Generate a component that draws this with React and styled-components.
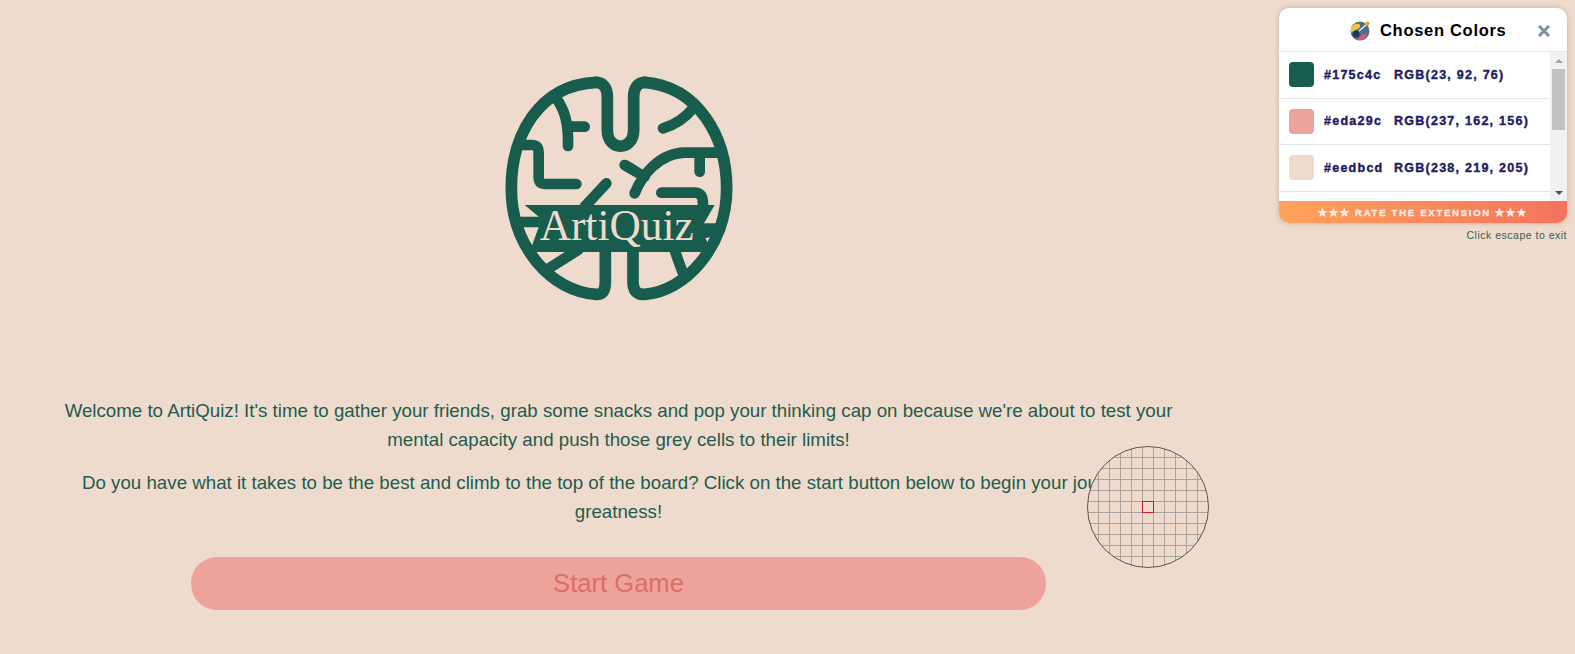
import React from 'react'
import styled, { createGlobalStyle } from 'styled-components'

const Global = createGlobalStyle`
  html, body { margin: 0; padding: 0; height: 100%; overflow: hidden; background: #eedbcd; }
  * { box-sizing: border-box; }
`

const Page = styled.div`
  position: relative;
  height: 654px;
  width: 1575px;
  background: #eedbcd;
  font-family: "Liberation Sans", Arial, sans-serif;
  overflow: hidden;
`
const Main = styled.main`
  width: 1237px;
  display: flex;
  flex-direction: column;
  align-items: center;
  padding: 60px 54px 0;
`
const Logo = styled.svg`
  width: 270px;
  height: 250px;
  display: block;
  margin-bottom: 86px;
`
const Para = styled.p`
  margin: 0 0 14px;
  font-size: 18.72px;
  line-height: 29px;
  color: #1f5c4d;
  text-align: center;
`
const StartButton = styled.button`
  width: 855px;
  height: 53px;
  margin-top: 17px;
  border: none;
  border-radius: 26px;
  background: #eda29c;
  color: #dc6f68;
  font-family: inherit;
  font-size: 25.6px;
`
const Magnifier = styled.div`
  position: absolute;
  left: 1087px;
  top: 446px;
  width: 122px;
  height: 122px;
  border-radius: 50%;
  border: 1px solid #5c5450;
  background-color: #eedbcd;
  background-image:
    repeating-linear-gradient(to right, transparent 0 10px, #aaa3a0 10px 11px),
    repeating-linear-gradient(to bottom, transparent 0 10px, #aaa3a0 10px 11px);
`
const Target = styled.div`
  position: absolute;
  left: 54px;
  top: 54px;
  width: 12px;
  height: 12px;
  border: 1px solid #d01c2a;
`
const Panel = styled.aside`
  position: absolute;
  left: 1279px;
  top: 8px;
  width: 288px;
  height: 215px;
  border-radius: 10px;
  background: #fff;
  box-shadow: 0 0 5px rgba(120, 90, 70, 0.35);
  display: flex;
  flex-direction: column;
  overflow: hidden;
`
const PanelHead = styled.header`
  height: 44px;
  flex: none;
  display: flex;
  align-items: center;
  border-bottom: 1px solid #e2e6ea;
  padding: 2px 0 0 71px;
`
const PanelTitle = styled.span`
  margin-left: 10px;
  font-size: 16.5px;
  font-weight: 700;
  letter-spacing: 0.7px;
  color: #000;
`
const CloseX = styled.svg`
  width: 14px;
  height: 14px;
  margin-left: 31px;
`
const PanelBody = styled.div`
  flex: 1;
  display: flex;
  min-height: 0;
`
const Rows = styled.div`
  flex: 1;
  overflow: hidden;
`
const Row = styled.div`
  height: 46.5px;
  display: flex;
  align-items: center;
  padding-left: 10px;
  border-bottom: 1px solid #e2e6ea;
`
const Swatch = styled.div`
  width: 25px;
  height: 25px;
  border-radius: 4px;
  background: ${p => p.$color};
  margin-right: 10px;
`
const Hex = styled.span`
  width: 70px;
  font-size: 12.5px;
  font-weight: 700;
  letter-spacing: 1.25px;
  color: #1d1d62;
  -webkit-text-stroke: 0.4px #1d1d62;
`
const Rgb = styled(Hex)`
  width: auto;
`
const Scrollbar = styled.div`
  width: 17px;
  flex: none;
  background: #f1f1f1;
  display: flex;
  flex-direction: column;
  align-items: center;
`
const Arrow = styled.div`
  height: 17px;
  flex: none;
  display: flex;
  align-items: center;
  justify-content: center;
  &::before {
    content: "";
    border-left: 4px solid transparent;
    border-right: 4px solid transparent;
    ${p => p.$down ? 'border-top: 4px solid #505050;' : 'border-bottom: 4px solid #a3a3a3;'}
  }
`
const Thumb = styled.div`
  width: 13px;
  height: 61px;
  background: #c1c1c1;
`
const Spacer = styled.div`
  flex: 1;
`
const RateBar = styled.div`
  height: 22px;
  flex: none;
  display: flex;
  align-items: center;
  justify-content: center;
  background: linear-gradient(to right, #ffa35c, #f3735e);
  color: #fdeee2;
  font-size: 9.5px;
  font-weight: 700;
  letter-spacing: 1.75px;
  -webkit-text-stroke: 0.3px #fdeee2;
`
const EscapeHint = styled.div`
  position: absolute;
  right: 8px;
  top: 229px;
  font-size: 10.5px;
  letter-spacing: 0.5px;
  color: #3d5c4e;
`

const colors = [
  { hex: '#175c4c', rgb: 'RGB(23, 92, 76)' },
  { hex: '#eda29c', rgb: 'RGB(237, 162, 156)' },
  { hex: '#eedbcd', rgb: 'RGB(238, 219, 205)' },
]

function BrainLogo() {
  return (
    <Logo viewBox="8 0 810 750">
      <g fill="none" stroke="#175c4c" strokeLinecap="round" strokeLinejoin="round">
        <g strokeWidth="35">
          <path d="M345 67 C170 75 90 230 90 385 C90 560 210 695 345 703 C365 705 372 690 372 665 L372 570" />
          <path d="M490 67 C650 80 736 230 736 385 C736 560 610 695 490 703 C465 705 455 690 455 665 L455 570" />
          <path d="M345 67 C365 67 378 85 378 110 L378 210 C378 275 457 275 457 210 L457 110 C457 85 470 67 490 67" />
        </g>
        <g strokeWidth="32">
          <path d="M225 115 C250 150 262 190 260 258 M260 200 L310 200" />
          <path d="M115 255 L150 255 C170 255 172 265 172 285 L172 350 C172 370 180 372 200 372 L285 372" />
          <path d="M545 205 C580 195 610 175 635 145" />
          <path d="M430 315 C465 335 480 345 490 350" />
          <path d="M460 400 C480 350 530 280 610 278 L720 278 M655 285 L655 335" />
          <path d="M540 398 L640 398 C665 398 665 420 665 440" />
          <path d="M375 370 L310 440" />
          <path d="M195 630 L290 570" />
          <path d="M580 570 C590 600 600 630 610 650" />
        </g>
      </g>
      <path fill="#175c4c" d="M130 435 L700 435 L668 490 L715 490 L712 525 L672 535 L685 556 L668 576 L145 576 L172 502 L100 502 L100 470 L172 470 Z" />
      <text x="406" y="540" textAnchor="middle" fontFamily="'Liberation Serif', serif" fontSize="130" fill="#eedbcd">ArtiQuiz</text>
    </Logo>
  )
}

function PickerIcon() {
  return (
    <svg width="20" height="20" viewBox="0 0 20 20">
      <circle cx="10" cy="10" r="9.5" fill="#4a7186" />
      <path d="M1 7 C3 3 6 2 9 3 C11 4 10 7 8 8 C5 9 3 10 1 12 Z" fill="#f5c63e" />
      <path d="M8 18 C11 15 14 12 17 13 C15 17 12 20 8 19 Z" fill="#ee4a7c" />
      <circle cx="6" cy="13" r="3.5" fill="#1f3a52" />
      <path d="M9 10 L17 3" stroke="#fff" strokeWidth="1.1" />
      <circle cx="17.5" cy="2.5" r="2" fill="#f39a2e" />
    </svg>
  )
}

export default function App() {
  return (
    <Page>
      <Global />
      <Main>
        <BrainLogo />
        <Para>Welcome to ArtiQuiz! It's time to gather your friends, grab some snacks and pop your thinking cap on because we're about to test your mental capacity and push those grey cells to their limits!</Para>
        <Para>Do you have what it takes to be the best and climb to the top of the board? Click on the start button below to begin your journey to greatness!</Para>
        <StartButton>Start Game</StartButton>
      </Main>
      <Magnifier><Target /></Magnifier>
      <Panel>
        <PanelHead>
          <PickerIcon />
          <PanelTitle>Chosen Colors</PanelTitle>
          <CloseX viewBox="0 0 14 14">
            <path d="M2 2 L12 12 M12 2 L2 12" stroke="#7f8c99" strokeWidth="3" />
          </CloseX>
        </PanelHead>
        <PanelBody>
          <Rows>
            {colors.map(c => (
              <Row key={c.hex}>
                <Swatch $color={c.hex} />
                <Hex>{c.hex}</Hex>
                <Rgb>{c.rgb}</Rgb>
              </Row>
            ))}
          </Rows>
          <Scrollbar>
            <Arrow />
            <Thumb />
            <Spacer />
            <Arrow $down />
          </Scrollbar>
        </PanelBody>
        <RateBar>★★★ RATE THE EXTENSION ★★★</RateBar>
      </Panel>
      <EscapeHint>Click escape to exit</EscapeHint>
    </Page>
  )
}
